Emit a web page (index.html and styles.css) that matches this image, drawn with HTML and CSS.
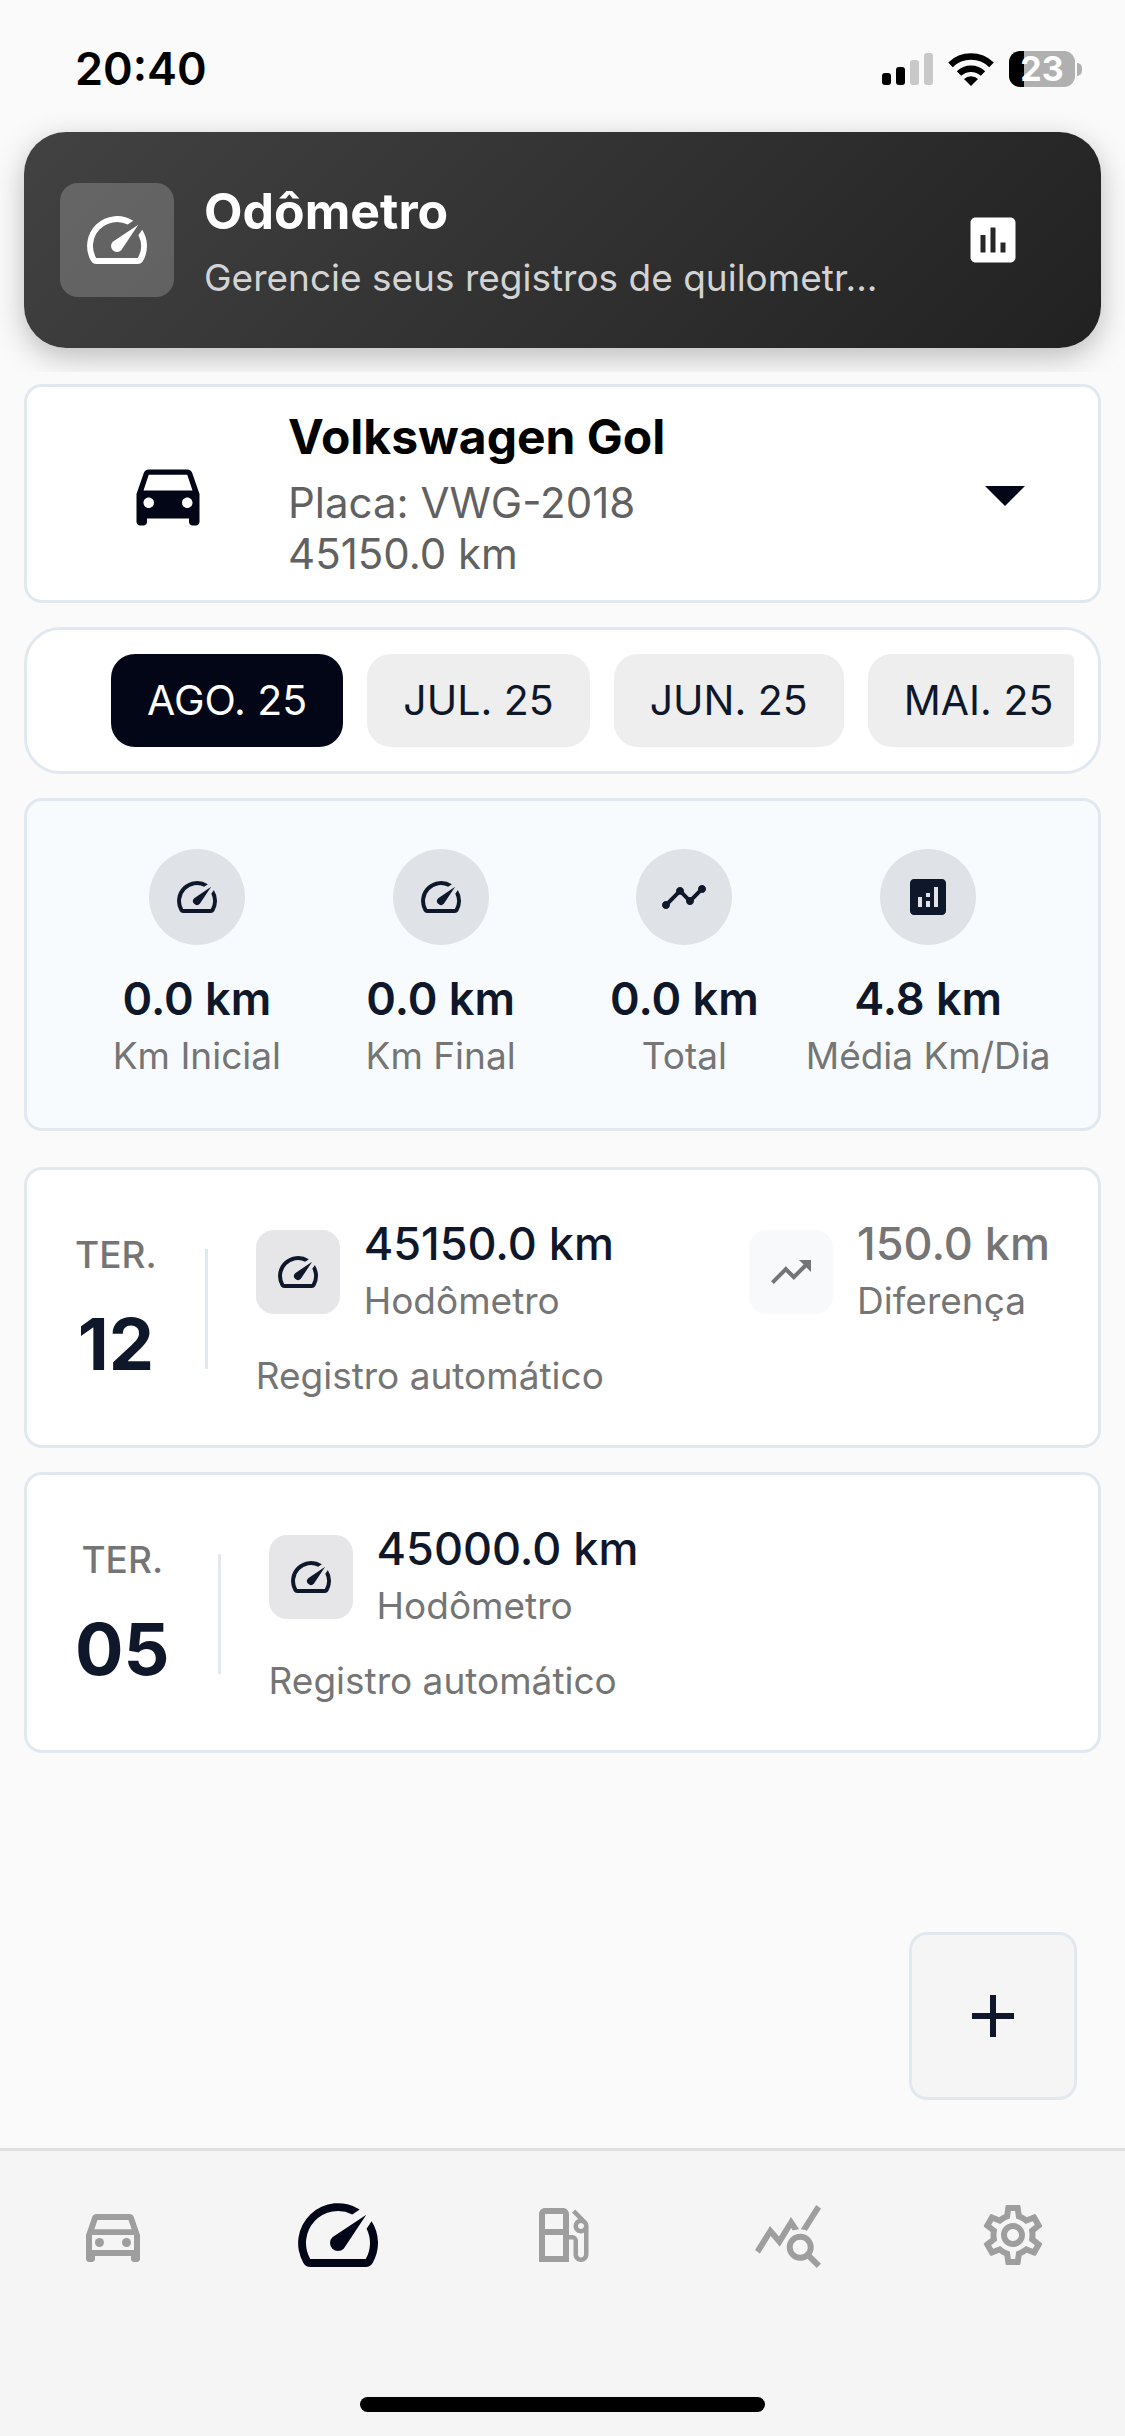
FILE: index.html
```html
<!DOCTYPE html>
<html lang="pt-BR">
<head>
<meta charset="utf-8">
<meta name="viewport" content="width=device-width, initial-scale=1">
<title>Odômetro</title>
<link rel="stylesheet" href="styles.css">
</head>
<body>
<svg class="sprite" aria-hidden="true">
  <symbol id="speed" viewBox="0 0 24 24"><path d="M20.38 8.57l-1.23 1.85a8 8 0 0 1-.22 7.58H5.07A8 8 0 0 1 15.58 6.85l1.85-1.23A10 10 0 0 0 3.35 19a2 2 0 0 0 1.72 1h13.85a2 2 0 0 0 1.74-1 10 10 0 0 0-.27-10.44zm-9.79 6.84a2 2 0 0 0 2.83 0l5.66-8.49-8.49 5.66a2 2 0 0 0 0 2.83z"/></symbol>
</svg>

<div class="status">
  <span class="clock">20:40</span>
  <div class="indicators">
    <svg width="51" height="32" viewBox="0 0 51 32" aria-hidden="true">
      <rect x="0" y="20" width="9" height="12" rx="3"/><rect x="14" y="14" width="9" height="18" rx="3"/>
      <rect x="28" y="7" width="9" height="25" rx="3" fill="#c8c8c8"/><rect x="42" y="0" width="9" height="32" rx="3" fill="#c8c8c8"/>
    </svg>
    <svg width="46" height="33" viewBox="0 0 46 33" aria-hidden="true">
      <path d="M23 33l-7-7a10 10 0 0 1 14 0z"/>
      <path d="M11 20.500a17.500 17.500 0 0 1 24 0" fill="none" stroke="#000" stroke-width="6.400"/>
      <path d="M2.500 11.800a29.500 29.500 0 0 1 41 0" fill="none" stroke="#000" stroke-width="6.600"/>
    </svg>
    <div class="battery"><span class="battery-level">23</span></div>
  </div>
</div>

<header class="header">
  <div class="banner">
    <div class="banner-icon"><svg class="icon-lg" aria-hidden="true"><use href="#speed"/></svg></div>
    <div class="banner-text">
      <h1 class="banner-title">Odômetro</h1>
      <p class="banner-sub">Gerencie seus registros de quilometr...</p>
    </div>
    <button class="banner-action" type="button" aria-label="Relatório">
      <svg class="icon-md" viewBox="0 0 24 24" aria-hidden="true"><path d="M19 3H5c-1.100 0-2 .9-2 2v14c0 1.100.9 2 2 2h14c1.100 0 2-.9 2-2V5c0-1.100-.9-2-2-2zM9 17H7v-7h2v7zm4 0h-2V7h2v10zm4 0h-2v-4h2v4z"/></svg>
    </button>
  </div>
</header>

<main class="content">
  <button class="vehicle card" type="button" aria-haspopup="listbox">
    <svg class="vehicle-icon" viewBox="0 0 24 24" aria-hidden="true"><path d="M18.920 6.010C18.720 5.420 18.160 5 17.500 5h-11c-.66 0-1.210.42-1.420 1.010L3 12v8c0 .55.45 1 1 1h1c.55 0 1-.45 1-1v-1h12v1c0 .55.45 1 1 1h1c.55 0 1-.45 1-1v-8l-2.080-5.990zM6.500 16c-.83 0-1.500-.67-1.500-1.500S5.670 13 6.500 13s1.500.67 1.500 1.500S7.330 16 6.500 16zm11 0c-.83 0-1.500-.67-1.500-1.500s.67-1.500 1.500-1.500 1.500.67 1.500 1.500-.67 1.500-1.500 1.500zM5 11l1.500-4.500h11L19 11H5z"/></svg>
    <span class="vehicle-info">
      <strong class="vehicle-name">Volkswagen Gol</strong>
      <span>Placa: VWG-2018</span>
      <span>45150.0 km</span>
    </span>
    <svg class="vehicle-caret" viewBox="0 0 24 24" aria-hidden="true"><path d="M7 10l5 5 5-5z"/></svg>
  </button>

  <div class="months card">
    <div class="months-scroll">
      <button class="chip chip-active" type="button">AGO. 25</button>
      <button class="chip" type="button">JUL. 25</button>
      <button class="chip" type="button">JUN. 25</button>
      <button class="chip" type="button">MAI. 25</button>
    </div>
  </div>

  <section class="stats card">
    <div class="stat">
      <span class="stat-icon"><svg class="icon-sm" aria-hidden="true"><use href="#speed"/></svg></span>
      <strong class="value bold">0.0 km</strong><span class="label">Km Inicial</span>
    </div>
    <div class="stat">
      <span class="stat-icon"><svg class="icon-sm" aria-hidden="true"><use href="#speed"/></svg></span>
      <strong class="value bold">0.0 km</strong><span class="label">Km Final</span>
    </div>
    <div class="stat">
      <span class="stat-icon"><svg class="icon-sm" viewBox="0 0 24 24" aria-hidden="true"><path d="M23 8c0 1.100-.9 2-2 2-.18 0-.35-.02-.51-.07l-3.560 3.550c.05.16.07.34.07.52 0 1.100-.9 2-2 2s-2-.9-2-2c0-.18.02-.36.07-.52l-2.550-2.550c-.16.05-.34.07-.52.07s-.36-.02-.52-.07l-4.550 4.560c.05.16.07.33.07.51 0 1.100-.9 2-2 2s-2-.9-2-2 .9-2 2-2c.18 0 .35.02.51.07l4.560-4.550C8.020 9.360 8 9.180 8 9c0-1.100.9-2 2-2s2 .9 2 2c0 .18-.02.36-.07.52l2.550 2.550c.16-.05.34-.07.52-.07s.36.02.52.07l3.550-3.560C19.020 8.350 19 8.180 19 8c0-1.100.9-2 2-2s2 .9 2 2z"/></svg></span>
      <strong class="value bold">0.0 km</strong><span class="label">Total</span>
    </div>
    <div class="stat">
      <span class="stat-icon"><svg class="icon-sm" viewBox="0 0 24 24" aria-hidden="true"><path d="M19 3H5c-1.100 0-2 .9-2 2v14c0 1.100.9 2 2 2h14c1.100 0 2-.9 2-2V5c0-1.100-.9-2-2-2zM9 17H7v-5h2v5zm4 0h-2v-3h2v3zm0-5h-2v-2h2v2zm4 5h-2V7h2v10z"/></svg></span>
      <strong class="value bold">4.8 km</strong><span class="label">Média Km/Dia</span>
    </div>
  </section>

  <section class="records">
    <article class="record card">
      <div class="day"><span class="day-name">TER.</span><strong class="day-number">12</strong></div>
      <div class="record-body">
        <div class="record-row">
          <div class="metric">
            <span class="metric-icon"><svg class="icon-sm" aria-hidden="true"><use href="#speed"/></svg></span>
            <div class="metric-text"><strong class="value">45150.0 km</strong><span class="label">Hodômetro</span></div>
          </div>
          <div class="metric metric-muted">
            <span class="metric-icon"><svg class="icon-sm" viewBox="0 0 24 24" aria-hidden="true"><path d="M16 6l2.290 2.290-4.880 4.880-4-4L2 16.590 3.410 18l6-6 4 4 6.300-6.290L22 12V6z"/></svg></span>
            <div class="metric-text"><strong class="value">150.0 km</strong><span class="label">Diferença</span></div>
          </div>
        </div>
        <p class="label">Registro automático</p>
      </div>
    </article>

    <article class="record card">
      <div class="day"><span class="day-name">TER.</span><strong class="day-number">05</strong></div>
      <div class="record-body">
        <div class="record-row">
          <div class="metric">
            <span class="metric-icon"><svg class="icon-sm" aria-hidden="true"><use href="#speed"/></svg></span>
            <div class="metric-text"><strong class="value">45000.0 km</strong><span class="label">Hodômetro</span></div>
          </div>
        </div>
        <p class="label">Registro automático</p>
      </div>
    </article>
  </section>

  <button class="add" type="button" aria-label="Adicionar">
    <svg class="icon-lg" viewBox="0 0 24 24" aria-hidden="true"><path d="M19 13h-6v6h-2v-6H5v-2h6V5h2v6h6v2z"/></svg>
  </button>
</main>

<footer class="footer">
  <nav class="tabs">
    <a class="tab" href="#veiculos" aria-label="Veículos"><svg class="icon-lg" viewBox="0 0 24 24" aria-hidden="true"><path d="M18.920 6.010C18.720 5.420 18.160 5 17.500 5h-11c-.66 0-1.210.42-1.420 1.010L3 12v8c0 .55.45 1 1 1h1c.55 0 1-.45 1-1v-1h12v1c0 .55.45 1 1 1h1c.55 0 1-.45 1-1v-8l-2.080-5.990zM6.850 7h10.290l1.080 3.110H5.770L6.850 7zM19 17H5v-5h14v5z"/><circle cx="7.500" cy="14.500" r="1.500"/><circle cx="16.500" cy="14.500" r="1.500"/></svg></a>
    <a class="tab tab-active" href="#odometro" aria-label="Odômetro" aria-current="page"><svg class="icon-xl" aria-hidden="true"><use href="#speed"/></svg></a>
    <a class="tab" href="#combustivel" aria-label="Combustível"><svg class="icon-lg" viewBox="0 0 24 24" aria-hidden="true"><path d="M19.770 7.230l.01-.01-3.720-3.720L15 4.560l2.110 2.110c-.94.36-1.610 1.260-1.610 2.330 0 1.380 1.120 2.500 2.500 2.500.36 0 .69-.08 1-.21v7.210c0 .55-.45 1-1 1s-1-.45-1-1V14c0-1.100-.9-2-2-2h-1V5c0-1.100-.9-2-2-2H6c-1.100 0-2 .9-2 2v16h10v-7.500h1.500v5c0 1.380 1.120 2.500 2.500 2.500s2.500-1.120 2.500-2.500V9c0-.69-.28-1.320-.73-1.770zM12 19H6v-7h6v7zm0-9H6V5h6v5zm6 0c-.55 0-1-.45-1-1s.45-1 1-1 1 .45 1 1-.45 1-1 1z"/></svg></a>
    <a class="tab" href="#estatisticas" aria-label="Estatísticas"><svg class="icon-lg" viewBox="0 0 24 24" aria-hidden="true"><path d="M19.880 18.470c.44-.7.7-1.510.7-2.390 0-2.490-2.010-4.500-4.500-4.500s-4.500 2.010-4.500 4.500 2.010 4.500 4.490 4.500c.88 0 1.700-.26 2.390-.7L21.580 23 23 21.580l-3.120-3.110zm-3.800.11c-1.380 0-2.500-1.120-2.500-2.500 0-1.380 1.120-2.500 2.500-2.500s2.500 1.120 2.500 2.500c0 1.380-1.120 2.500-2.500 2.500zm-.36-8.500c-.74.02-1.450.18-2.100.45l-.55-.83-3.800 6.180-3.010-3.520-3.630 5.810L1 17l5-8 3 3.500L13 6l2.720 4.080zm2.590.5c-.64-.28-1.330-.45-2.050-.49L21.380 2 23 3.180l-4.690 7.400z"/></svg></a>
    <a class="tab" href="#ajustes" aria-label="Ajustes"><svg class="icon-lg" viewBox="0 0 24 24" aria-hidden="true"><path d="M19.430 12.980c.04-.32.07-.64.07-.98 0-.34-.03-.66-.07-.98l2.110-1.650c.19-.15.24-.42.12-.64l-2-3.460c-.09-.16-.26-.25-.44-.25-.06 0-.12.01-.17.03l-2.490 1c-.52-.4-1.080-.73-1.690-.98l-.38-2.650C14.460 2.180 14.250 2 14 2h-4c-.25 0-.46.18-.49.42l-.38 2.650c-.61.25-1.170.59-1.690.98l-2.490-1c-.06-.02-.12-.03-.18-.03-.17 0-.34.09-.43.25l-2 3.460c-.13.22-.07.49.12.64l2.110 1.650c-.04.32-.07.65-.07.98 0 .33.03.66.07.98l-2.110 1.650c-.19.15-.24.42-.12.64l2 3.460c.09.16.26.25.44.25.06 0 .12-.01.17-.03l2.490-1c.52.4 1.080.73 1.690.98l.38 2.650c.03.24.24.42.49.42h4c.25 0 .46-.18.49-.42l.38-2.650c.61-.25 1.170-.59 1.690-.98l2.490 1c.06.02.12.03.18.03.17 0 .34-.09.43-.25l2-3.460c.12-.22.07-.49-.12-.64l-2.110-1.650zm-1.980-1.710c.04.31.05.52.05.73 0 .21-.02.43-.05.73l-.14 1.130.89.7 1.080.84-.7 1.210-1.270-.51-1.040-.42-.9.68c-.43.32-.84.56-1.250.73l-1.060.43-.16 1.130-.2 1.350h-1.400l-.19-1.350-.16-1.130-1.060-.43c-.43-.18-.83-.41-1.230-.71l-.91-.7-1.060.43-1.270.51-.7-1.210 1.080-.84.89-.7-.14-1.130c-.03-.31-.05-.54-.05-.74s.02-.43.05-.73l.14-1.130-.89-.7-1.080-.84.7-1.210 1.270.51 1.040.42.9-.68c.43-.32.84-.56 1.250-.73l1.060-.43.16-1.130.2-1.350h1.390l.19 1.350.16 1.130 1.060.43c.43.18.83.41 1.230.71l.91.7 1.060-.43 1.270-.51.7 1.210-1.070.85-.89.7.14 1.130zM12 8c-2.210 0-4 1.790-4 4s1.790 4 4 4 4-1.790 4-4-1.790-4-4-4zm0 6c-1.100 0-2-.9-2-2s.9-2 2-2 2 .9 2 2-.9 2-2 2z"/></svg></a>
  </nav>
  <div class="home-bar"></div>
</footer>
</body>
</html>
```
FILE: styles.css
```css
*, *::before, *::after { box-sizing: border-box; }

body {
  margin: 0;
  min-height: 100vh;
  display: flex;
  flex-direction: column;
  background: #fafafa;
  color: #0f172a;
  font-family: Inter, "Liberation Sans", sans-serif;
  font-size: 37px;
  line-height: 48px;
}

h1, p { margin: 0; }

button {
  font: inherit;
  color: inherit;
  border: 0;
  padding: 0;
  background: none;
  cursor: pointer;
}

svg { display: block; flex: none; }
.sprite { position: absolute; width: 0; height: 0; }
.icon-sm, .icon-md, .icon-lg, .icon-xl, .vehicle-icon, .vehicle-caret { fill: currentColor; }
.icon-sm { width: 48px; height: 48px; }
.icon-md { width: 60px; height: 60px; }
.icon-lg { width: 72px; height: 72px; }
.icon-xl { width: 96px; height: 96px; }

.card {
  background: #fff;
  border: 3px solid #e2e8f0;
  border-radius: 18px;
}

/* System status bar */
.status {
  display: flex;
  justify-content: space-between;
  align-items: center;
  padding: 39px 42px 3px 75px;
  color: #000;
}
.clock { font-size: 45px; line-height: 60px; font-weight: 600; }
.indicators { display: flex; align-items: center; gap: 15px; }
.battery {
  position: relative;
  width: 66px;
  height: 36px;
  margin-right: 8px;
  border-radius: 11px;
  background: linear-gradient(90deg, #000 15px, #b0b0b0 15px);
  text-align: center;
}
.battery::after {
  content: "";
  position: absolute;
  left: 68px;
  top: 12px;
  width: 5px;
  height: 13px;
  border-radius: 0 5px 5px 0;
  background: #b0b0b0;
}
.battery-level {
  display: block;
  font-size: 34px;
  line-height: 36px;
  font-weight: 700;
  color: #fff;
}

/* Page banner */
.header { padding: 30px 24px 24px; overflow: hidden; }
.banner {
  display: flex;
  align-items: center;
  gap: 30px;
  padding: 48px 36px;
  border-radius: 42px;
  background: linear-gradient(135deg, #424242, #212121);
  box-shadow: 0 9px 30px rgba(0, 0, 0, 0.25);
  color: #fff;
}
.banner-icon {
  padding: 21px;
  border-radius: 18px;
  background: rgba(255, 255, 255, 0.2);
}
.banner-text { flex: 1; display: grid; gap: 12px; }
.banner-title { font-size: 50px; line-height: 63px; font-weight: 700; }
.banner-sub { line-height: 45px; color: #d3d3d3; white-space: nowrap; }
.banner-action { padding: 0 42px; }

.content {
  flex: 1;
  display: flex;
  flex-direction: column;
  gap: 24px;
  padding: 12px 24px 48px;
}

/* Vehicle picker */
.vehicle {
  display: flex;
  align-items: center;
  min-height: 219px;
  padding: 21px 45px 21px 99px;
  background: #fff;
  border: 3px solid #e2e8f0;
  text-align: left;
  color: #020617;
}
.vehicle-icon { width: 84px; height: 84px; }
.vehicle-info {
  flex: 1;
  display: flex;
  flex-direction: column;
  margin-left: 78px;
  font-size: 42px;
  line-height: 51px;
  color: #616161;
}
.vehicle-name {
  margin-bottom: 12px;
  font-size: 48px;
  line-height: 57px;
  font-weight: 700;
  color: #000;
}
.vehicle-caret { width: 96px; height: 96px; }

/* Month filter */
.months { padding: 24px 24px 24px 84px; border-radius: 36px; }
.months-scroll { display: flex; gap: 24px; overflow: hidden; border-radius: 6px; }
.chip {
  flex: none;
  padding: 21px 36px;
  border-radius: 24px;
  background: #eee;
  font-size: 41px;
  line-height: 51px;
}
.chip-active { background: #020617; color: #fff; }

/* Monthly totals */
.stats {
  display: grid;
  grid-template-columns: repeat(4, minmax(0, 1fr));
  padding: 48px;
  background: #f7fbfe;
}
.stat { display: flex; flex-direction: column; align-items: center; white-space: nowrap; }
.stat-icon { padding: 24px; border-radius: 50%; background: #dfe2e7; margin-bottom: 28px; }

.value { margin-bottom: 8px; font-size: 45px; line-height: 51px; font-weight: 500; }
.bold { font-weight: 600; }
.label { color: #757575; }

/* Odometer records */
.records { display: grid; gap: 24px; padding-top: 12px; }
.record { display: flex; align-items: center; padding: 48px 48px 45px; }
.day {
  display: flex;
  flex-direction: column;
  align-items: center;
  gap: 21px;
}
.day-name { color: #757575; font-weight: 500; }
.day-number { font-size: 72px; line-height: 87px; font-weight: 700; }
.record-body {
  flex: 1;
  display: grid;
  gap: 27px;
  align-items: center;
  position: relative;
  margin-left: 48px;
  padding-left: 51px;
}
.record-body::before {
  content: "";
  position: absolute;
  left: 0;
  top: 50%;
  width: 3px;
  height: 120px;
  margin-top: -60px;
  background: #e2e8f0;
}
.record-row { display: flex; justify-content: space-between; }
.metric { display: flex; align-items: center; gap: 24px; }
.metric-icon { padding: 18px; border-radius: 18px; background: #e6e6e9; }
.metric-text { display: flex; flex-direction: column; }
.metric-muted { color: #757575; }
.metric-muted .metric-icon { background: #f8f9fb; }

.add {
  align-self: flex-end;
  margin-top: auto;
  margin-right: 24px;
  padding: 45px;
  border: 3px solid #e2e8f0;
  border-radius: 18px;
  background: #f5f5f5;
}

/* Bottom navigation */
.footer { border-top: 3px solid #e0e0e0; background: #f5f5f5; padding: 36px 0 24px; }
.tabs { display: flex; align-items: center; }
.tab { flex: 1; display: flex; justify-content: center; color: #9e9e9e; }
.tab-active { color: #020617; }
.home-bar {
  width: 36%;
  height: 15px;
  margin: 114px auto 0;
  border-radius: 8px;
  background: #000;
}
```
